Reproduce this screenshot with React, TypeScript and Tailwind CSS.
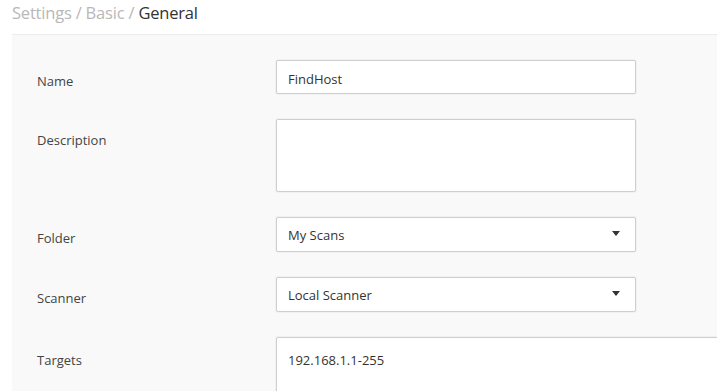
import React from "react";

function Caret() {
  return (
    <svg width="8" height="5" viewBox="0 0 8 5" className="absolute right-[15px] top-[13px]">
      <path d="M0 0h8L4 5z" fill="#333" />
    </svg>
  );
}

function Label({ children, top = "pt-[12px]" }: { children: React.ReactNode; top?: string }) {
  return <div className={`${top} text-[13px] leading-[18px] text-[#444]`}>{children}</div>;
}

export default function App() {
  const field = "bg-white border border-[#cfcfcf] rounded-[2px] shadow-[0_0_0_1px_#f1f1f1]";

  return (
    <div className="w-[717px] h-[391px] overflow-hidden bg-white" style={{ fontFamily: '"Open Sans", "Noto Sans", sans-serif' }}>
      {/* Breadcrumb */}
      <div className="h-[34px] pl-[12px] pt-[2px] text-[16.5px] leading-[22px] tracking-[-0.2px]">
        <span className="text-[#b8b8b8]">Settings / Basic / </span>
        <span className="text-[#333]">General</span>
      </div>

      {/* Form panel */}
      <div className="ml-[12px] h-[357px] border-t border-[#ececec] bg-[#f9f9f9] pl-[25px] pt-[25px]">
        <div className="grid grid-cols-[239px_1fr] gap-y-[25px]">
          <Label>Name</Label>
          <div className={`${field} w-[360px] h-[34px] pl-[11px] pt-[9px] text-[13px] leading-[18px] text-[#333]`}>
            FindHost
          </div>

          <Label>Description</Label>
          <div className={`${field} w-[360px] h-[73px]`} />

          <Label>Folder</Label>
          <div className={`${field} relative w-[360px] h-[35px] pl-[11px] pt-[8px] text-[13px] leading-[18px] text-[#333]`}>
            My Scans
            <Caret />
          </div>

          <Label>Scanner</Label>
          <div className={`${field} relative w-[360px] h-[35px] pl-[11px] pt-[8px] text-[13px] leading-[18px] text-[#333]`}>
            Local Scanner
            <Caret />
          </div>

          <Label top="pt-[14px]">Targets</Label>
          <div className={`${field} w-[460px] h-[80px] pl-[11px] pt-[13px] text-[13px] leading-[18px] text-[#333]`}>
            192.168.1.1-255
          </div>
        </div>
      </div>
    </div>
  );
}
